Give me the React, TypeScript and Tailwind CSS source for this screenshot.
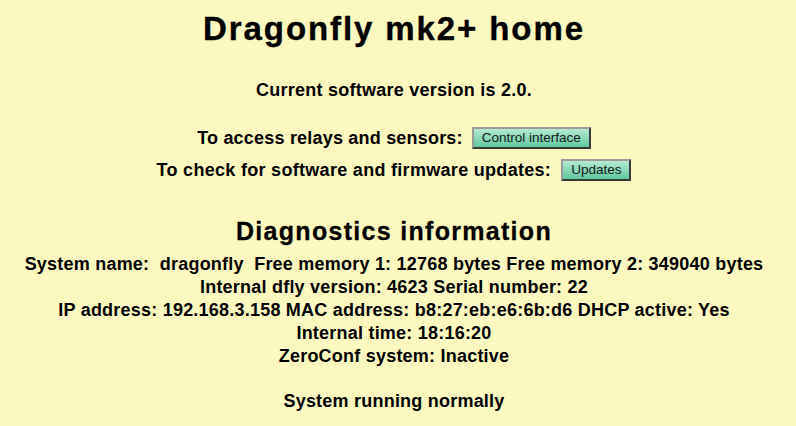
import React from "react";

const diagnostics = [
  "System name:\u00a0 dragonfly\u00a0 Free memory 1: 12768 bytes Free memory 2: 349040 bytes",
  "Internal dfly version: 4623 Serial number: 22",
  "IP address: 192.168.3.158 MAC address: b8:27:eb:e6:6b:d6 DHCP active: Yes",
  "Internal time: 18:16:20",
  "ZeroConf system: Inactive",
];

function MintButton({ label }: { label: string }) {
  return (
    <button
      type="button"
      className="h-[22px] px-[8px] border-2 border-t-[#9a9a9a] border-l-[#9a9a9a] border-r-[#3a3a3a] border-b-[#3a3a3a] bg-gradient-to-b from-[#b4ead2] to-[#5fc79d] text-[13.5px] leading-[16px] font-normal tracking-normal text-[#101820]"
    >
      {label}
    </button>
  );
}

export default function App() {
  return (
    <div className="min-h-[426px] w-full pr-[8px] bg-[#fcf9c0] font-['Liberation_Sans',Arial,sans-serif] font-bold text-black text-center">
      <h1 className="pt-[10px] text-[33px] leading-[37px] tracking-[1.9px] [-webkit-text-stroke:0.4px_black]">
        Dragonfly mk2+ home
      </h1>

      <p className="mt-[33px] text-[18px] leading-[20px] tracking-[0.25px]">Current software version is 2.0.</p>

      <div className="mt-[25px] flex h-[26px] items-center justify-center gap-[9px] text-[18px] tracking-[0.2px]">
        <span>To access relays and sensors:</span>
        <MintButton label="Control interface" />
      </div>
      <div className="mt-[6px] flex h-[26px] items-center justify-center gap-[10px] text-[18px] tracking-[0.3px]">
        <span>To check for software and firmware updates:</span>
        <MintButton label="Updates" />
      </div>

      <h2 className="mt-[34px] text-[25px] leading-[28px] tracking-[1.3px] [-webkit-text-stroke:0.3px_black]">
        Diagnostics information
      </h2>

      <div className="mt-[8px] text-[18px] leading-[23px] tracking-[0.22px]">
        {diagnostics.map((line) => (
          <div key={line}>{line}</div>
        ))}
      </div>

      <p className="mt-[22px] text-[18px] leading-[23px] tracking-[0.22px]">System running normally</p>
    </div>
  );
}
